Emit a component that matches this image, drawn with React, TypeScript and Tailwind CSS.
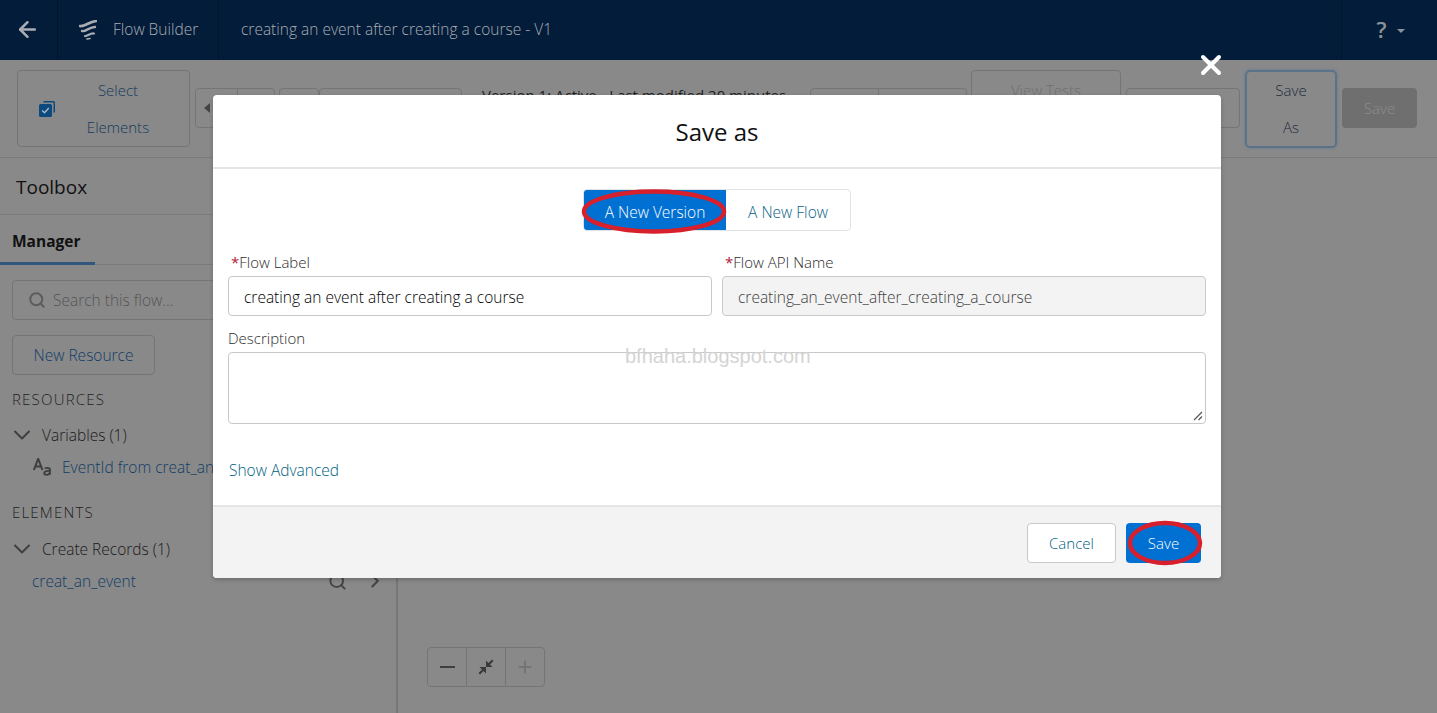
import React from 'react';
import { Search, ChevronDown, ChevronRight, ArrowLeft, Plus, X } from 'lucide-react';

const font = { fontFamily: '"Open Sans", "Liberation Sans", sans-serif' };

function FlowLogo() {
  return (
    <svg width="18" height="20" viewBox="0 0 18 20" fill="none" stroke="#a9adb3" strokeLinecap="round" className="shrink-0">
      <path d="M1 6 C5 7 10 2 17 1" strokeWidth="2.600" />
      <path d="M3 11 C7 12 10 7 16 7" strokeWidth="2.400" />
      <path d="M6 16 C8 16.500 11 13 15 13.500" strokeWidth="2.200" />
      <path d="M8 19 L11 18.500" strokeWidth="1.600" />
    </svg>
  );
}

function SelectIcon() {
  return (
    <svg width="16" height="16" viewBox="0 0 16 16" className="shrink-0">
      <path d="M4.500 0h10A1.500 1.500 0 0 1 16 1.500v10h-1.500V2a.5.5 0 0 0-.5-.5H4.500z" fill="#0c4a7e" />
      <rect x="0" y="3" width="13" height="13" rx="1.500" fill="#0c4a7e" />
      <path d="M3.200 9.500l2.300 2.300 4.300-4.800" stroke="#a5bacb" strokeWidth="1.400" fill="none" />
    </svg>
  );
}

function AaIcon() {
  return (
    <svg width="18" height="18" viewBox="0 0 16 18" preserveAspectRatio="none" className="shrink-0" fill="none" stroke="#3f3f3f" strokeWidth="1.800">
      <path d="M0.800 12 L4.600 0.800 L8.400 12 M2 8.500 H7.200" />
      <path d="M10.500 10.500 Q11.500 9.800 13 9.800 Q15 9.800 15 11.500 V16.800 M15 13 Q10 12.600 10 15 Q10 16.800 12 16.800 Q14 16.800 15 15" />
    </svg>
  );
}

function ToolBtn({ className, children }: { className: string; children?: React.ReactNode }) {
  return (
    <div className={`flex shrink-0 items-center justify-center rounded border border-[#757575] ${className}`}>
      {children}
    </div>
  );
}

function Toolbar() {
  return (
    <div className="flex h-[98px] items-start border-b border-[#7b7b7b] pl-[17px] pt-[10px] text-[15px] font-light">
      <ToolBtn className="h-[77px] w-[173px] pl-[21px]">
        <SelectIcon />
        <div className="flex flex-1 flex-col items-center gap-[19px] pr-[8px] leading-[18px] text-[#123a5c]">
          <span>Select</span>
          <span>Elements</span>
        </div>
      </ToolBtn>
      <div className="ml-[5px] mt-[18px] flex h-[40px] w-[80px] rounded border border-[#757575]">
        <div className="flex w-[42px] items-center border-r border-[#757575] pl-[8px]">
          <span className="h-0 w-0 border-y-[5px] border-r-[6px] border-y-transparent border-r-[#444]" />
        </div>
      </div>
      <ToolBtn className="ml-[4px] mt-[18px] h-[40px] w-[40px]" />
      <ToolBtn className="mt-[18px] h-[40px] w-[143px]" />
      <span className="ml-[20px] mt-[14px] w-[328px] whitespace-nowrap font-normal text-[#222]">Version 1: Active - Last modified 20 minutes</span>
      <div className="mt-[18px] flex h-[40px] w-[157px] shrink-0 rounded border border-[#757575]">
        <div className="w-[68px] border-r border-[#757575]" />
      </div>
      <ToolBtn className="ml-[4px] h-[77px] w-[150px] items-start pt-[8px] text-[#6f6f6f]">View Tests</ToolBtn>
      <ToolBtn className="ml-[5px] mt-[18px] h-[40px] w-[114px]" />
      <div className="ml-[5px] flex h-[78px] w-[92px] shrink-0 flex-col items-center justify-center gap-[19px] rounded-[5px] border-2 border-[#5a7388] pb-[2px] leading-[18px] text-[#1e2a3c] shadow-[0_0_3px_#5f7a94]">
        <span>Save</span>
        <span>As</span>
      </div>
      <div className="ml-[5px] mt-[18px] flex h-[40px] w-[75px] shrink-0 items-center justify-center rounded bg-[#6f6f6f] text-[#8d8d8d]">
        Save
      </div>
    </div>
  );
}

function Sidebar() {
  return (
    <div className="h-full w-[398px] shrink-0 border-r-2 border-[#777] text-[15.500px] font-light">
      <div className="flex h-[57px] items-center border-b border-[#7b7b7b] pl-[16px] pt-[3px] text-[19px] font-normal text-[#111]">Toolbox</div>
      <div className="relative h-[50px] border-b border-[#7b7b7b] pl-[12px] pt-[15px] font-bold leading-[22px] text-[#111]">
        Manager
        <div className="absolute bottom-[-1px] left-0 h-[3px] w-[95px] bg-[#31577f]" />
      </div>
      <div className="px-[12px] pt-[15px]">
        <div className="flex h-[40px] items-center gap-[7px] rounded border border-[#757575] pl-[15px] text-[#555]">
          <Search size={18} strokeWidth={2.600} className="text-[#5c5c5c]" />
          <span className="pt-[2px]">Search this flow...</span>
        </div>
        <div className="mt-[15px] flex h-[40px] w-[143px] items-center justify-center rounded border border-[#757575] pt-[2px] text-[#103d66]">
          New Resource
        </div>
      </div>
      <div className="mt-[14px] pl-[12px] text-[15px] leading-[20px] tracking-[1.200px] text-[#222]">RESOURCES</div>
      <div className="mt-[16px] flex h-[20px] items-center gap-[6px] pl-[8px] text-[#1a1a1a]">
        <ChevronDown size={28} strokeWidth={1.700} className="text-[#3f3f3f]" />
        <span className="pt-[2px]">Variables (1)</span>
      </div>
      <div className="mt-[12px] flex h-[20px] items-center gap-[11px] pl-[33px] text-[#103d66]">
        <AaIcon />
        <span className="whitespace-nowrap pt-[2px]">EventId from creat_an</span>
      </div>
      <div className="mt-[25px] pl-[12px] text-[15px] leading-[20px] tracking-[1.200px] text-[#222]">ELEMENTS</div>
      <div className="mt-[17px] flex h-[20px] items-center gap-[6px] pl-[8px] text-[#1a1a1a]">
        <ChevronDown size={28} strokeWidth={1.700} className="text-[#3f3f3f]" />
        <span className="pt-[2px]">Create Records (1)</span>
      </div>
      <div className="mt-[12px] flex h-[20px] items-center justify-between pl-[32px] pr-[10px] text-[#103d66]">
        <span className="pt-[2px]">creat_an_event</span>
        <span className="flex items-center gap-[17px] text-[#444]">
          <Search size={19} strokeWidth={2.400} />
          <ChevronRight size={22} strokeWidth={2.200} />
        </span>
      </div>
    </div>
  );
}

function Canvas() {
  return (
    <div className="flex-1 pl-[29px] pt-[489px]">
      <div className="flex h-[40px] w-[118px] rounded border border-[#757575]">
        <div className="flex w-[39px] items-center justify-center border-r border-[#757575]">
          <span className="h-[2px] w-[15px] bg-[#3f3f3f]" />
        </div>
        <div className="flex w-[39px] items-center justify-center border-r border-[#757575]">
          <svg width="16" height="16" viewBox="0 0 16 16" fill="#3a3a3a">
            <path d="M14 0.500L15.500 2L12 5.500L14.500 8H8V1.500L10.500 4zM2 15.500L0.500 14L4 10.500L1.500 8H8V14.500L5.500 12z" />
          </svg>
        </div>
        <div className="flex flex-1 items-center justify-center text-[#6f6f6f]">
          <Plus size={20} strokeWidth={1.800} />
        </div>
      </div>
    </div>
  );
}

function Field({ label, required, children }: { label: string; required?: boolean; children: React.ReactNode }) {
  return (
    <div className="min-w-0 flex-1">
      <div className="h-[24px] pl-[3px] text-[15px] leading-[20px] text-[#2b2b2b]">
        {required && <span className="font-normal text-[#b0213a]">*</span>}
        {label}
      </div>
      {children}
    </div>
  );
}

function SaveDialog() {
  return (
    <div className="absolute left-[213px] top-[95px] flex h-[483px] w-[1008px] flex-col rounded bg-white shadow-[0_2px_4px_rgba(0,0,0,0.2)]">
      <div className="flex h-[74px] shrink-0 items-center justify-center border-b-2 border-[#e5e5e5] pt-[2px] text-[24px] text-[#111]">
        Save as
      </div>
      <div className="flex-1 px-[15px] pt-[20px] text-[15.500px] font-light">
        <div className="flex justify-center">
          <div className="flex h-[42px] w-[268px] overflow-hidden rounded border border-[#e3e3e3]">
            <div className="flex w-[142px] items-center justify-center bg-[#0070d2] pt-[6px] text-white">A New Version</div>
            <div className="flex flex-1 items-center justify-center pt-[6px] text-[#0b5f88]">A New Flow</div>
          </div>
        </div>
        <div className="mt-[21px] flex gap-[10px]">
          <Field label="Flow Label" required>
            <div className="flex h-[40px] items-center rounded border border-[#c9c9c9] pl-[15px] pt-[4px] text-black">
              creating an event after creating a course
            </div>
          </Field>
          <Field label="Flow API Name" required>
            <div className="flex h-[40px] items-center rounded border border-[#c9c9c9] bg-[#f3f3f3] pl-[15px] pt-[4px] text-[#3e3e3c]">
              creating_an_event_after_creating_a_course
            </div>
          </Field>
        </div>
        <div className="mt-[12px] h-[24px] text-[15px] leading-[20px] text-[#2b2b2b]">Description</div>
        <div className="relative h-[72px] rounded border border-[#c9c9c9]">
          <svg className="absolute bottom-[2px] right-[2px]" width="10" height="10" viewBox="0 0 10 10" stroke="#555" strokeWidth="1.200">
            <path d="M1 9 L9 1 M5.500 9 L9 5.500" />
          </svg>
        </div>
        <div className="mt-[35px] pl-[1px] text-[#005f82]">Show Advanced</div>
      </div>
      <div className="flex h-[73px] shrink-0 items-center justify-end gap-[10px] rounded-b border-t-2 border-[#e5e5e5] bg-[#f3f3f3] pr-[20px] text-[15px] font-light">
        <div className="flex h-[40px] w-[89px] items-center justify-center rounded border border-[#c9c9c9] bg-white pt-[1px] text-[#005f82]">Cancel</div>
        <div className="flex h-[40px] w-[75px] items-center justify-center rounded bg-[#0070d2] pt-[1px] text-white">Save</div>
      </div>
    </div>
  );
}

export default function App() {
  return (
    <div className="relative h-[713px] w-[1437px] overflow-hidden bg-[#898989]" style={font}>
      <header className="flex h-[60px] items-stretch bg-[#031c3a] pb-[1px] text-[15.500px] font-light text-[#a9adb3]">
        <div className="flex w-[58px] items-center border-r border-[#01142b] pl-[15px]">
          <ArrowLeft size={25} strokeWidth={2.400} className="text-[#a9adb3]" />
        </div>
        <div className="flex w-[161px] items-center gap-[16px] border-r border-[#01142b] pl-[21px]">
          <FlowLogo />
          <span className="whitespace-nowrap">Flow Builder</span>
        </div>
        <div className="flex flex-1 items-center pl-[22px]">creating an event after creating a course - V1</div>
        <div className="flex w-[96px] items-center justify-center gap-[10px] border-l border-[#01142b] pl-[2px]">
          <span className="text-[22px] font-semibold text-[#8d9299]">?</span>
          <span className="mt-[3px] h-0 w-0 border-x-[4px] border-t-[4px] border-x-transparent border-t-[#8d9299]" />
        </div>
      </header>
      <Toolbar />
      <div className="flex h-[555px]">
        <Sidebar />
        <Canvas />
      </div>

      <SaveDialog />
      <X size={32} strokeWidth={3} className="absolute left-[1195px] top-[49px] text-white" />

      <svg className="pointer-events-none absolute left-[578px] top-[186px]" width="152" height="50" fill="none">
        <ellipse cx="76" cy="25.500" rx="70" ry="20" stroke="#d81f2c" strokeWidth="4.500" />
      </svg>
      <svg className="pointer-events-none absolute left-[1124px] top-[518px]" width="82" height="52" fill="none">
        <ellipse cx="41" cy="25" rx="35" ry="20" stroke="#d81f2c" strokeWidth="4.500" />
      </svg>

      <div className="pointer-events-none absolute left-[625px] top-[345px] text-[20px] leading-[22px] text-[#d4d4d4]" style={{ fontFamily: '"Liberation Sans", sans-serif' }}>
        bfhaha.blogspot.com
      </div>
    </div>
  );
}
